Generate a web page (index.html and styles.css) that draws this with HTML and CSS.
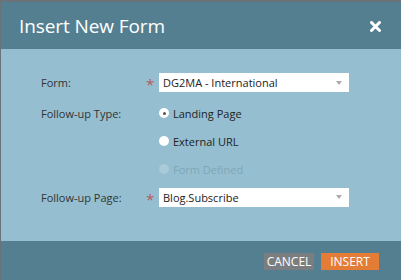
FILE: index.html
```html
<!DOCTYPE html>
<html lang="en">
<head>
    <meta charset="UTF-8">
    <title>Insert New Form</title>
    <link rel="stylesheet" href="styles.css">
</head>
<body>
    <div class="dialog">
        <div class="header">
            <h1>Insert New Form</h1>
            <svg class="close" width="11" height="11" viewBox="0 0 11 11">
                <path d="M1.5 1.5 L9.5 9.5 M9.5 1.5 L1.5 9.5" stroke="#fff" stroke-width="3" stroke-linecap="round"/>
            </svg>
        </div>
        <div class="content">
            <div class="row first">
                <label>Form:</label>
                <span class="req">*</span>
                <div class="select">
                    <span>DG2MA - International</span>
                    <span class="arrow"></span>
                </div>
            </div>
            <div class="row">
                <label>Follow-up Type:</label>
                <span class="req"></span>
                <div class="radio"><span class="dot checked"></span>Landing Page</div>
            </div>
            <div class="row">
                <label></label>
                <span class="req"></span>
                <div class="radio"><span class="dot"></span>External URL</div>
            </div>
            <div class="row">
                <label></label>
                <span class="req"></span>
                <div class="radio disabled"><span class="dot"></span>Form Defined</div>
            </div>
            <div class="row">
                <label>Follow-up Page:</label>
                <span class="req">*</span>
                <div class="select">
                    <span>Blog.Subscribe</span>
                    <span class="arrow"></span>
                </div>
            </div>
        </div>
        <div class="footer">
            <button class="btn cancel">Cancel</button>
            <button class="btn insert">Insert</button>
        </div>
    </div>
</body>
</html>
```

FILE: styles.css
```css
body {
    margin: 0;
    background: #6b7378;
    font-family: "Open Sans", Arial, sans-serif;
    color: #333;
}
.dialog {
    margin: 2px 0 0 1px;
    width: 400px;
    height: 278px;
    display: flex;
    flex-direction: column;
}
.header {
    height: 47px;
    background: #537f91;
    display: flex;
    align-items: center;
    justify-content: space-between;
    padding: 0 20px 0 18px;
}
.header h1 {
    margin: 0;
    font-size: 19px;
    font-weight: 400;
    color: #fff;
    letter-spacing: -0.1px;
}
.close {
    margin-top: 2px;
}
.content {
    flex: 1;
    background: #95bfd0;
    padding: 24px 0 0 40px;
    display: flex;
    flex-direction: column;
    gap: 8px;
}
.row {
    display: flex;
    align-items: center;
    height: 20px;
    font-size: 11px;
}
.row.first {
    height: 19px;
    margin-bottom: 3px;
}
.row label {
    width: 105px;
}
.req {
    width: 13px;
    color: #b75a5a;
    font-size: 15px;
    line-height: 1;
    padding-top: 4px;
    box-sizing: border-box;
}
.select {
    width: 190px;
    height: 19px;
    background: #fff;
    display: flex;
    align-items: center;
    justify-content: space-between;
    padding: 0 7px 0 4px;
    box-sizing: border-box;
    color: #222;
}
.arrow {
    width: 0;
    height: 0;
    border-left: 3.5px solid transparent;
    border-right: 3.5px solid transparent;
    border-top: 4px solid #aaa;
}
.radio {
    display: flex;
    align-items: center;
    color: #222;
}
.dot {
    width: 10px;
    height: 10px;
    border-radius: 50%;
    background: #fff;
    margin-right: 4px;
    display: flex;
    align-items: center;
    justify-content: center;
}
.dot.checked::after {
    content: "";
    width: 3px;
    height: 3px;
    border-radius: 50%;
    background: #555;
}
.radio.disabled {
    color: #7ea6b7;
}
.radio.disabled .dot {
    background: #a9cbd9;
}
.footer {
    height: 39px;
    background: #537f91;
    display: flex;
    justify-content: flex-end;
    align-items: center;
    gap: 7px;
    padding: 0 22px 0 0;
}
.btn {
    border: none;
    height: 17px;
    padding: 0;
    color: #fff;
    font-family: "Open Sans", Arial, sans-serif;
    font-size: 12px;
    text-transform: uppercase;
    margin-top: 2px;
}
.cancel {
    width: 50px;
    background: #7b7e81;
}
.insert {
    width: 58px;
    background: #e57c35;
}
```
